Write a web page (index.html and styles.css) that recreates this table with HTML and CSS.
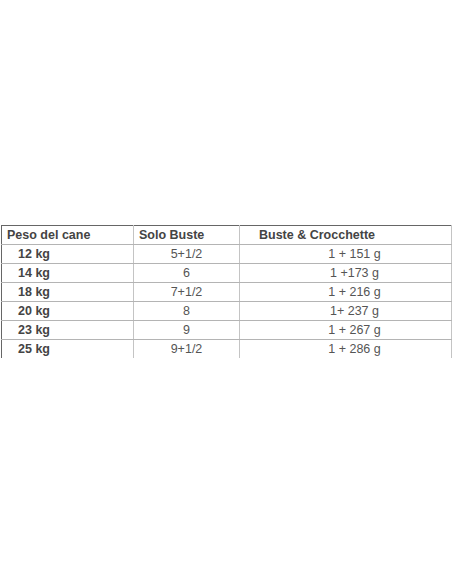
FILE: index.html
```html
<!DOCTYPE html>
<html>
<head>
<meta charset="utf-8">
<link rel="stylesheet" href="styles.css">
</head>
<body>
<div class="wrap">
<table class="dose">
  <colgroup><col class="c1"><col class="c2"><col class="c3"></colgroup>
  <thead>
    <tr><th class="h1">Peso del cane</th><th class="h2">Solo Buste</th><th class="h3">Buste &amp; Crocchette</th></tr>
  </thead>
  <tbody>
    <tr><td class="w">12 kg</td><td class="n">5+1/2</td><td class="g">1 + 151 g</td></tr>
    <tr><td class="w">14 kg</td><td class="n">6</td><td class="g">1 +173 g</td></tr>
    <tr><td class="w">18 kg</td><td class="n">7+1/2</td><td class="g">1 + 216 g</td></tr>
    <tr><td class="w">20 kg</td><td class="n">8</td><td class="g">1+ 237 g</td></tr>
    <tr><td class="w">23 kg</td><td class="n">9</td><td class="g">1 + 267 g</td></tr>
    <tr><td class="w">25 kg</td><td class="n">9+1/2</td><td class="g">1 + 286 g</td></tr>
  </tbody>
</table>
</div>
</body>
</html>
```
FILE: styles.css
```css
html, body { margin: 0; padding: 0; background: #fff; }
.wrap { padding: 225px 1px 0 1px; }
.dose {
  width: 450px;
  border-collapse: collapse;
  table-layout: fixed;
  font-family: "Liberation Sans", Arial, sans-serif;
  font-size: 12.5px;
  color: #555;
  border-left: 1px solid #666;
  border-right: 1px solid #666;
  border-top: 1px solid #666;
}
.c1 { width: 132px; }
.c2 { width: 106px; }
.c3 { width: 212px; }
.dose th, .dose td {
  height: 18px;
  padding: 0;
  line-height: 18px;
  border-bottom: 1px solid #b4b4b4;
  border-right: 1px solid #c4c4c4;
  white-space: nowrap;
}
.dose tbody tr:last-child td { border-bottom: none; }
.dose th { font-weight: bold; color: #444; text-align: left; }
.h1 { padding-left: 5px !important; }
.h2 { padding-left: 5px !important; }
.h3 { padding-left: 19px !important; }
.w { font-weight: bold; color: #444; padding-left: 16px !important; }
.n { text-align: center; }
.g { text-align: center; padding-left: 18px !important; }
```
